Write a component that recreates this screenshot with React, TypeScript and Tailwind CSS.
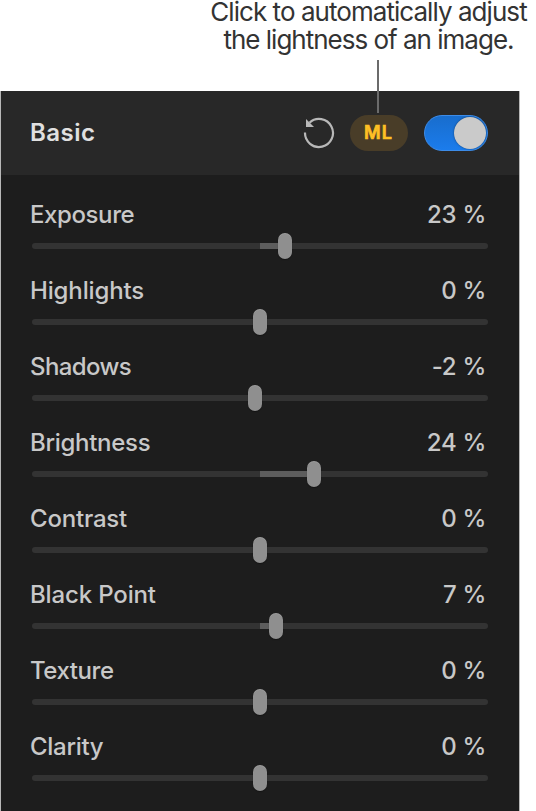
import clsx from "clsx";

type Adjustment = {
  label: string;
  value: number;
  // thumb offset from the middle of the track, in px
  offset: number;
  tracking: string;
};

const adjustments: Adjustment[] = [
  { label: "Exposure", value: 23, offset: 25, tracking: "tracking-[-0.4px]" },
  { label: "Highlights", value: 0, offset: 0, tracking: "tracking-[-0.15px]" },
  { label: "Shadows", value: -2, offset: -5, tracking: "tracking-[-0.6px]" },
  { label: "Brightness", value: 24, offset: 54, tracking: "tracking-[-0.3px]" },
  { label: "Contrast", value: 0, offset: 0, tracking: "tracking-[-0.2px]" },
  { label: "Black Point", value: 7, offset: 16, tracking: "tracking-[-0.15px]" },
  { label: "Texture", value: 0, offset: 0, tracking: "tracking-[-0.45px]" },
  { label: "Clarity", value: 0, offset: 0, tracking: "tracking-[-0.3px]" },
];

function ResetIcon() {
  return (
    <svg width="32" height="32" viewBox="0 0 32 32" fill="none">
      <path d="M2 15.5A14 14 0 1 0 6.5 5.7" stroke="#b8b8b8" strokeWidth="2.2" />
      <path d="M3 2v8h8z" fill="#b8b8b8" />
    </svg>
  );
}

function SliderRow({ label, value, offset, tracking }: Adjustment) {
  return (
    <div className="h-[76px]">
      <div className="flex h-[30px] items-center justify-between pr-0.5 text-[24px] leading-[30px] font-medium text-[#c8c8c8]">
        <span className={clsx("whitespace-nowrap -ml-[2px]", tracking)}>{label}</span>
        <span className="whitespace-nowrap tracking-[-0.3px]">{value} %</span>
      </div>
      <div className="relative mt-[13px] h-[6px] rounded-full bg-[#333333]">
        {offset > 0 && (
          <div className="absolute left-1/2 top-0 h-full bg-[#5d5d5d]" style={{ width: offset }} />
        )}
        <div
          className="absolute -top-[10px] h-[26px] w-[14px] rounded-full bg-[#8f8f8f] shadow-[0_1px_1px_rgba(0,0,0,0.35),inset_0_1px_0_rgba(255,255,255,0.12)]"
          style={{ left: `calc(50% + ${offset - 7}px)` }}
        />
      </div>
    </div>
  );
}

export default function App() {
  return (
    <div className="relative h-[811px] w-[536px] overflow-hidden bg-white font-['Inter',sans-serif]">
      <div className="flex h-[91px] flex-col items-center pl-[201px] text-[26px] text-[#333333]">
        <p className="h-[26px] whitespace-nowrap leading-[24px] tracking-[-0.95px]">Click to automatically adjust</p>
        <p className="whitespace-nowrap leading-[28px] tracking-[-1px]">the lightness of an image.</p>
      </div>

      {/* callout line pointing at the ML button */}
      <div className="absolute left-[377px] top-[60px] z-10 h-[53px] w-[2px] bg-[#6b6b6b]" />

      <div className="h-[720px] w-[520px] border-x border-[#b8b8b8] bg-[#1d1d1d]">
        <div className="flex h-[84px] items-center bg-[#282828] pl-[29px] pr-[31px]">
          <h1 className="flex-1 text-[24px] leading-[30px] font-semibold tracking-[0.5px] text-[#e0e0e0]">Basic</h1>
          <button type="button" className="mr-[15px]">
            <ResetIcon />
          </button>
          <button
            type="button"
            className="mr-4 h-9 w-[58px] rounded-full bg-[#493d28] pr-px text-[18px] leading-9 font-semibold tracking-[1.2px] text-[#ffc024] [-webkit-text-stroke:0.7px_#ffc024]"
          >
            ML
          </button>
          <div className="flex h-9 w-16 items-center justify-end rounded-full border border-[#3d8ce8] bg-linear-to-b from-[#186dcd] to-[#1b7cec] pr-[1px]">
            <div className="size-8 rounded-full bg-[#cacaca] shadow-[0_0_2px_rgba(0,0,0,0.5)]" />
          </div>
        </div>

        <div className="pl-[31px] pr-[31px] pt-[25px]">
          {adjustments.map((a) => (
            <SliderRow key={a.label} {...a} />
          ))}
        </div>
      </div>
    </div>
  );
}
